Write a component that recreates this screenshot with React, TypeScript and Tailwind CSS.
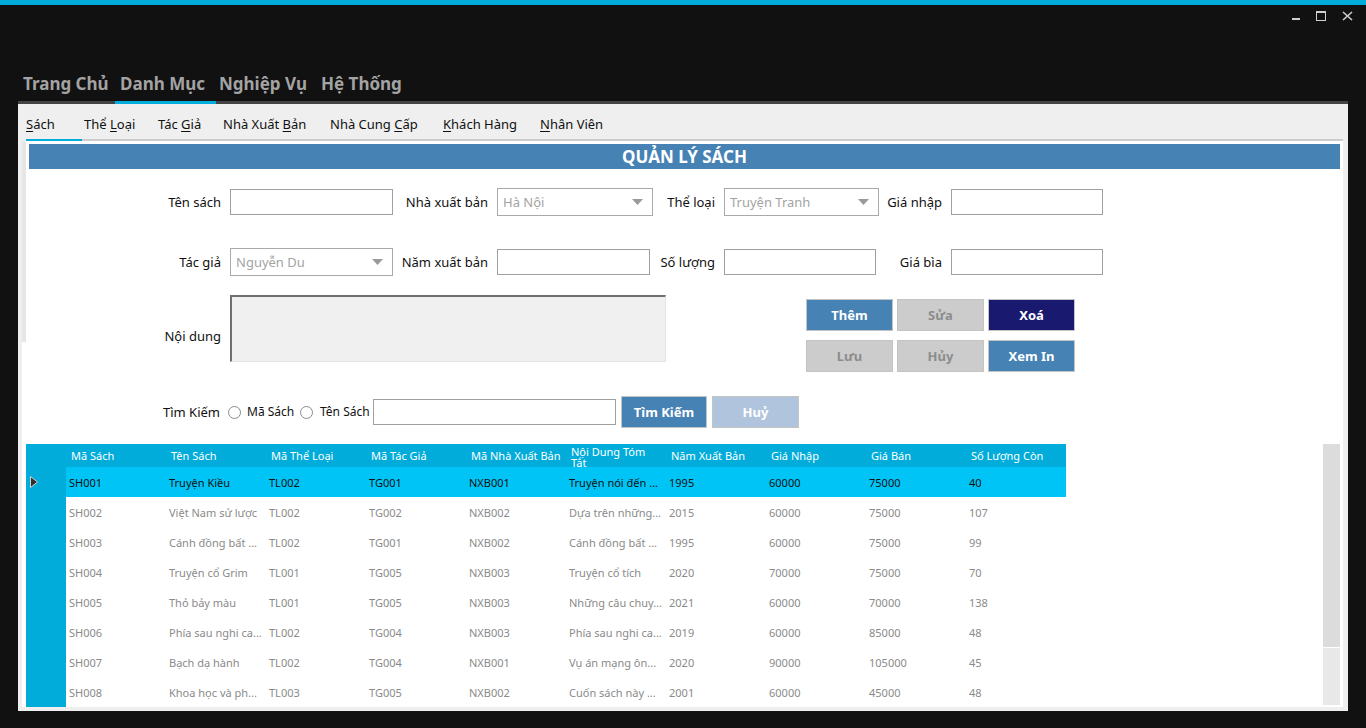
import React from 'react';

const columns = [
  'Mã Sách',
  'Tên Sách',
  'Mã Thể Loại',
  'Mã Tác Giả',
  'Mã Nhà Xuất Bản',
  'Nội Dung Tóm Tắt',
  'Năm Xuất Bản',
  'Giá Nhập',
  'Giá Bán',
  'Số Lượng Còn',
];

const rows = [
  ['SH001', 'Truyện Kiều', 'TL002', 'TG001', 'NXB001', 'Truyện nói đến ...', '1995', '60000', '75000', '40'],
  ['SH002', 'Việt Nam sử lược', 'TL002', 'TG002', 'NXB002', 'Dựa trên những...', '2015', '60000', '75000', '107'],
  ['SH003', 'Cánh đồng bất ...', 'TL002', 'TG001', 'NXB002', 'Cánh đồng bất ...', '1995', '60000', '75000', '99'],
  ['SH004', 'Truyện cổ Grim', 'TL001', 'TG005', 'NXB003', 'Truyện cổ tích', '2020', '70000', '75000', '70'],
  ['SH005', 'Thỏ bảy màu', 'TL001', 'TG005', 'NXB003', 'Những câu chuy...', '2021', '60000', '70000', '138'],
  ['SH006', 'Phía sau nghi ca...', 'TL002', 'TG004', 'NXB003', 'Phía sau nghi ca...', '2019', '60000', '85000', '48'],
  ['SH007', 'Bạch dạ hành', 'TL002', 'TG004', 'NXB001', 'Vụ án mạng ôn...', '2020', '90000', '105000', '45'],
  ['SH008', 'Khoa học và ph...', 'TL003', 'TG005', 'NXB002', 'Cuốn sách này ...', '2001', '60000', '45000', '48'],
];

// sub tabs: [before, underlined letter, after, cell width]
const subTabs: [string, string, string, number][] = [
  ['', 'S', 'ách', 58],
  ['Thể ', 'L', 'oại', 74],
  ['Tác ', 'G', 'iả', 65],
  ['Nhà Xuất ', 'B', 'ản', 107],
  ['Nhà Cung ', 'C', 'ấp', 113],
  ['', 'K', 'hách Hàng', 97],
  ['', 'N', 'hân Viên', 90],
];

const Label = ({ w, children }: { w: number; children: React.ReactNode }) => (
  <div className="text-right text-[13px] leading-[20px] text-[#111] whitespace-nowrap" style={{ width: w }}>
    {children}
  </div>
);

const TextBox = ({ w }: { w: number }) => (
  <div className="ml-[9px] h-[26px] border border-[#a0a0a0] bg-white" style={{ width: w }} />
);

const Combo = ({ w, value }: { w: number; value: string }) => (
  <div
    className="ml-[9px] h-[28px] border border-[#a9a9a9] bg-white flex items-center justify-between pl-[5px] pr-[9px]"
    style={{ width: w }}
  >
    <span className="text-[13px] text-[#a3a3a3] leading-[20px]">{value}</span>
    <svg width="11" height="6" viewBox="0 0 11 6">
      <polygon points="0,0 11,0 5.5,6" fill="#9a9a9a" />
    </svg>
  </div>
);

const Btn = ({ label, cls }: { label: string; cls: string }) => (
  <div className={`h-[32px] w-[87px] border border-[#c4c4c4] flex items-center justify-center pt-[1px] text-[13px] font-bold ${cls}`}>
    {label}
  </div>
);

const Radio = () => <div className="w-[13px] h-[13px] rounded-full border border-[#8a8a8a] bg-white" />;

export default function App() {
  return (
    <div className="w-[1366px] h-[728px] bg-[#111111] flex flex-col overflow-hidden font-['Noto_Sans',sans-serif]">
      {/* top accent */}
      <div className="h-[5px] bg-[#00acd9]" />

      {/* window controls */}
      <div className="h-[67px] flex justify-end pt-[6px] pr-[13px]">
        <div className="flex gap-[15px] h-[10px]">
          <div className="w-[10px] h-[10px] flex items-end justify-center">
            <div className="w-[8px] h-[2px] bg-[#cfcfcf] mb-[1px]" />
          </div>
          <div className="w-[10px] h-[10px] border border-[#cfcfcf] border-t-2" />
          <svg width="11" height="10" viewBox="0 0 11 10" className="ml-[1px]">
            <path d="M1 1 L10 9 M10 1 L1 9" stroke="#cfcfcf" strokeWidth="1.6" />
          </svg>
        </div>
      </div>

      {/* main menu */}
      <div className="h-[29px] pb-[5px] flex items-center text-[17px] font-bold text-[#a3a3a3] leading-[24px]">
        <div className="ml-[18px] w-[97px] pl-[5px] whitespace-nowrap">Trang Chủ</div>
        <div className="w-[101px] pl-[5px] whitespace-nowrap">Danh Mục</div>
        <div className="w-[100px] pl-[3px] whitespace-nowrap">Nghiệp Vụ</div>
        <div className="pl-[5px] whitespace-nowrap">Hệ Thống</div>
      </div>
      <div className="ml-[18px] w-[1330px] h-[3px] bg-[#444444] flex">
        <div className="ml-[97px] w-[101px] h-full bg-[#00acd9]" />
      </div>

      {/* panel */}
      <div className="ml-[18px] w-[1330px] h-[607px] bg-[#efefef] flex flex-col pl-[4px] pr-[5px] pb-[4px]">
        {/* sub tabs */}
        <div className="h-[35px] pt-[10px] pl-[4px] flex text-[13px] leading-[20px] text-[#111]">
          {subTabs.map(([a, u, b, w], i) => (
            <div key={i} className="whitespace-nowrap" style={{ width: w }}>
              {a}
              <span className="underline underline-offset-2">{u}</span>
              {b}
            </div>
          ))}
        </div>
        <div className="ml-[4px] h-[2px] bg-[#cccccc] flex">
          <div className="w-[56px] h-full bg-[#00acd9]" />
        </div>

        {/* content */}
        <div className="flex-1 flex bg-white">
          <div className="w-[4px] flex flex-col">
            <div className="h-[201px] bg-[#e6e6e6]" />
          </div>
          <div className="flex-1 flex flex-col">
            <div className="mt-[3px] ml-[3px] w-[1311px] h-[25px] bg-[#4682b4] flex items-center justify-center text-white text-[17px] font-bold leading-[22px]">
              QUẢN LÝ SÁCH
            </div>

            {/* row 1 */}
            <div className="mt-[19px] h-[28px] flex items-center">
              <Label w={195}>Tên sách</Label>
              <TextBox w={163} />
              <Label w={95}>Nhà xuất bản</Label>
              <Combo w={156} value="Hà Nội" />
              <Label w={62}>Thể loại</Label>
              <Combo w={155} value="Truyện Tranh" />
              <Label w={63}>Giá nhập</Label>
              <TextBox w={152} />
            </div>

            {/* row 2 */}
            <div className="mt-[32px] h-[28px] flex items-center">
              <Label w={195}>Tác giả</Label>
              <Combo w={163} value="Nguyễn Du" />
              <Label w={95}>Năm xuất bản</Label>
              <TextBox w={153} />
              <Label w={65}>Số lượng</Label>
              <TextBox w={152} />
              <Label w={66}>Giá bìa</Label>
              <TextBox w={152} />
            </div>

            {/* row 3 */}
            <div className="mt-[19px] flex items-start">
              <div className="pt-[31px]">
                <Label w={195}>Nội dung</Label>
              </div>
              <div className="ml-[9px] w-[436px] h-[67px] bg-[#f0f0f0] border-t-2 border-l-2 border-r border-b border-t-[#707070] border-l-[#707070] border-r-[#e3e3e3] border-b-[#e3e3e3]" />
              <div className="ml-[140px] mt-[4px] grid grid-cols-[87px_87px_87px] gap-x-[4px] gap-y-[9px]">
                <Btn label="Thêm" cls="bg-[#4682b4] text-white" />
                <Btn label="Sửa" cls="bg-[#cccccc] text-[#8c8c8c]" />
                <Btn label="Xoá" cls="bg-[#191970] text-white" />
                <Btn label="Lưu" cls="bg-[#cccccc] text-[#8c8c8c]" />
                <Btn label="Hủy" cls="bg-[#cccccc] text-[#8c8c8c]" />
                <Btn label="Xem In" cls="bg-[#4682b4] text-white" />
              </div>
            </div>

            {/* search */}
            <div className="mt-[24px] h-[32px] flex items-center pl-[137px] text-[#111]">
              <div className="w-[65px] text-[13px] leading-[20px]">Tìm Kiếm</div>
              <Radio />
              <div className="ml-[6px] w-[53px] text-[12px] leading-[18px]">Mã Sách</div>
              <Radio />
              <div className="ml-[7px] w-[53px] text-[12px] leading-[18px]">Tên Sách</div>
              <div className="w-[243px] h-[26px] border border-[#a0a0a0] bg-white" />
              <div className="ml-[5px] w-[86px] h-[32px] bg-[#4682b4] border border-[#c4c4c4] flex items-center justify-center pt-[1px] text-white text-[13px] font-bold">
                Tìm Kiếm
              </div>
              <div className="ml-[5px] w-[87px] h-[32px] bg-[#b0c4de] border border-[#c4c4c4] flex items-center justify-center pt-[1px] text-white text-[13px] font-bold">
                Huỷ
              </div>
            </div>

            {/* grid */}
            <div className="mt-[16px] h-[263px] w-[1314px] flex">
              <div className="w-[1040px] flex flex-col text-[11px]">
                <div className="h-[23px] flex bg-[#01acda] text-white">
                  <div className="w-[40px]" />
                  {columns.map((c, i) => (
                    <div key={i} className="w-[100px] h-full overflow-hidden pl-[5px]">
                      {i === 5 ? (
                        <div className="w-[92px] leading-[11px] pt-[2px]">{c}</div>
                      ) : (
                        <div className="leading-[23px] whitespace-nowrap">{c}</div>
                      )}
                    </div>
                  ))}
                </div>
                {rows.map((r, ri) => (
                  <div key={ri} className={`h-[30px] flex ${ri === 0 ? 'bg-[#00c4f5] text-[#111]' : 'text-[#8a8a8a]'}`}>
                    <div className="w-[40px] h-full bg-[#01acda] flex items-center pl-[4px]">
                      {ri === 0 && (
                        <svg width="8" height="12" viewBox="0 0 8 12">
                          <polygon points="0.5,0.5 7.5,6 0.5,11.5" fill="#303030" stroke="#d0d0d0" strokeWidth="1" />
                        </svg>
                      )}
                    </div>
                    {r.map((c, ci) => (
                      <div key={ci} className="w-[100px] pl-[3px] pt-[1px] leading-[30px] whitespace-nowrap overflow-hidden">
                        {c}
                      </div>
                    ))}
                  </div>
                ))}
              </div>
              <div className="flex-1" />
              <div className="w-[17px] flex flex-col">
                <div className="h-[203px] bg-[#dcdcdc]" />
                <div className="h-[1px]" />
                <div className="h-[57px] bg-[#e8e8e8]" />
              </div>
            </div>
          </div>
        </div>
      </div>
    </div>
  );
}
